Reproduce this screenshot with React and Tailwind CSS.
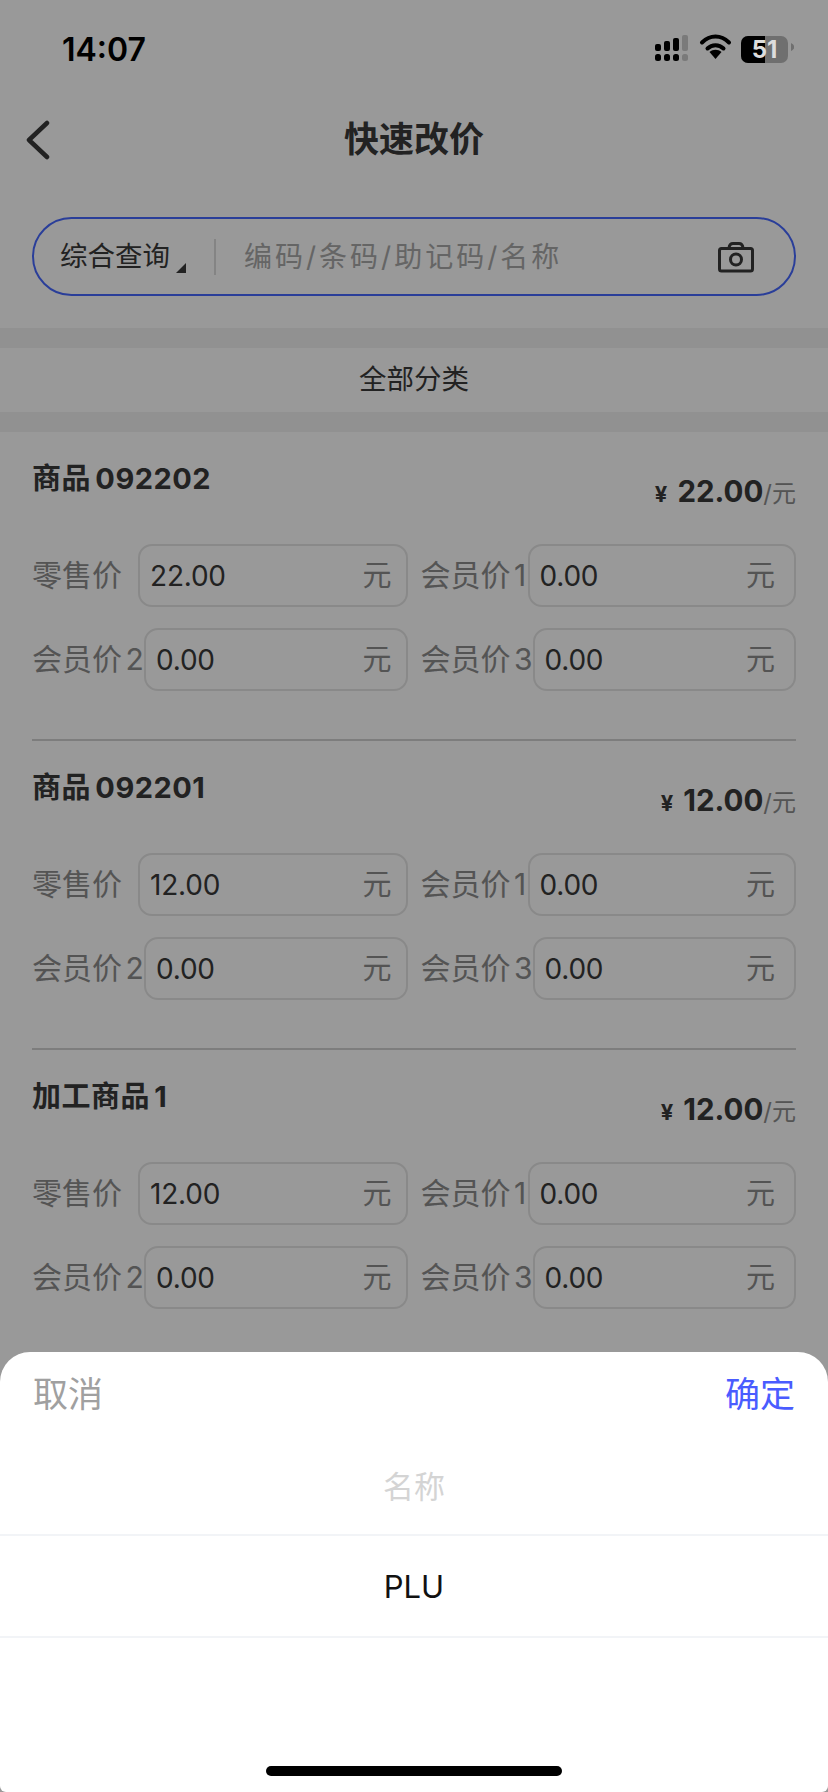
const FONT = "font-['Inter','Noto_Sans_CJK_SC',sans-serif]"

const items = [
  { name: '商品 092202', price: '22.00', retail: '22.00' },
  { name: '商品 092201', price: '12.00', retail: '12.00' },
  { name: '加工商品 1', price: '12.00', retail: '12.00' },
]

function StatusBar() {
  return (
    <div className="relative z-20 h-[96px] flex justify-between pl-[62px] pr-[34px] pt-[33px]">
      <span className="text-[32px] leading-[34px] font-semibold text-black">14:07</span>
      <div className="flex">
        <svg width="139" height="30" viewBox="655 35 139 30">
          {/* signal */}
          <rect x="655" y="46" width="6" height="7" rx="2" fill="#000" />
          <rect x="664" y="43" width="6" height="10" rx="2" fill="#000" />
          <rect x="673" y="40" width="6" height="13" rx="2" fill="#000" />
          <rect x="682" y="37" width="6" height="16" rx="2" fill="#7a7a7a" />
          <rect x="655" y="56" width="6" height="7" rx="2.5" fill="#000" />
          <rect x="664" y="56" width="6" height="7" rx="2.5" fill="#000" />
          <rect x="673" y="56" width="6" height="7" rx="2.5" fill="#000" />
          <rect x="682" y="56" width="6" height="7" rx="2.5" fill="#7a7a7a" />
          {/* wifi */}
          <path d="M702 44.5 C710 36.5 721 36.5 729 44.5" fill="none" stroke="#000" strokeWidth="4" strokeLinecap="round" />
          <path d="M707.500 50.500 C712 46 719 46 723.500 50.500" fill="none" stroke="#000" strokeWidth="4" strokeLinecap="round" />
          <path d="M709.500 54 L715.500 61 L721.500 54 C718 51 713 51 709.500 54 Z" fill="#000" />
          {/* battery nub */}
          <path d="M791 45 C793.500 46.500 794.500 48 794.500 49 C794.500 50 793.500 51.500 791 53 Z" fill="#6f6f6f" />
        </svg>
        <div className="absolute right-[40px] top-[36px] w-[47px] h-[27px] rounded-[7px] overflow-hidden flex bg-[#6f6f6f]">
          <div className="w-[24px] h-full bg-black" />
          <span className="absolute inset-0 text-center text-[24px] leading-[27px] font-bold text-[#dddddd]">51</span>
        </div>
      </div>
    </div>
  )
}

function NavBar() {
  return (
    <div className="relative h-[86px] flex items-center justify-center">
      <svg className="absolute left-[24px] top-[24px]" width="28" height="40" viewBox="0 0 28 40">
        <path d="M23 3 L5 20 L23 37" fill="none" stroke="#393939" strokeWidth="4.500" strokeLinecap="round" strokeLinejoin="round" />
      </svg>
      <h1 className="text-[35px] font-semibold text-[#393939]">快速改价</h1>
    </div>
  )
}

function SearchBox() {
  return (
    <div className="mx-[32px] mt-[35px] h-[79px] rounded-[40px] border-2 border-[#4668ff] flex items-center pl-[26px] pr-[40px]">
      <span className="text-[27.500px] text-[#393939] whitespace-nowrap">综合查询</span>
      <svg className="mt-[22px] ml-[6px] shrink-0" width="10" height="10" viewBox="0 0 10 10">
        <path d="M10 0 V10 H0 Z" fill="#393939" />
      </svg>
      <div className="w-[2px] h-[36px] bg-[#dddddd] ml-[28px] mr-[28px] shrink-0" />
      <span className="flex-1 text-[28px] text-[#a8a8a8] whitespace-nowrap tracking-[3px]">编码/条码/助记码/名称</span>
      <svg width="36" height="32" viewBox="0 0 36 32">
        <rect x="1.500" y="7.500" width="33" height="22.500" rx="2" fill="none" stroke="#393939" strokeWidth="3" />
        <path d="M11 7 Q11.500 2.500 15 2.500 H21 Q24.500 2.500 25 7" fill="none" stroke="#393939" strokeWidth="3" />
        <circle cx="18" cy="18.500" r="5.500" fill="none" stroke="#393939" strokeWidth="3" />
      </svg>
    </div>
  )
}

function Field({ label, labelWidth, value, unitPad }) {
  return (
    <div className="flex items-center">
      <span className={`${labelWidth} shrink-0 text-[30px] text-[#8c8c8c] whitespace-nowrap [word-spacing:-5px]`}>{label}</span>
      <div className={`flex-1 h-[63px] rounded-[14px] border-2 border-[#e5e5e5] flex items-center justify-between pl-[10px] ${unitPad}`}>
        <span className="text-[28px] text-[#393939] tracking-[-0.2px]">{value}</span>
        <span className="text-[29px] text-[#8c8c8c]">元</span>
      </div>
    </div>
  )
}

function Item({ name, price, retail }) {
  return (
    <div className="mx-[32px] h-[309px] border-b-2 border-[#d0d0d0]">
      <div className="flex justify-between h-[112px] pt-[28px]">
        <span className="text-[29px] leading-[38px] font-bold text-[#393939] tracking-[0.5px] [word-spacing:-3px]">{name}</span>
        <div className="flex items-baseline h-[38px] mt-[9px] text-[#393939]">
          <span className="text-[22px] font-bold mr-[10px]">¥</span>
          <span className="text-[29.500px] font-bold">{price}</span>
          <span className="text-[24px] text-[#8c8c8c]">/元</span>
        </div>
      </div>
      <div className="grid grid-cols-2 gap-x-[13px] gap-y-[21px]">
        <Field label="零售价" labelWidth="w-[106px]" value={retail} unitPad="pr-[14px]" />
        <Field label="会员价 1" labelWidth="w-[107px]" value="0.00" unitPad="pr-[19px]" />
        <Field label="会员价 2" labelWidth="w-[112px]" value="0.00" unitPad="pr-[14px]" />
        <Field label="会员价 3" labelWidth="w-[112px]" value="0.00" unitPad="pr-[19px]" />
      </div>
    </div>
  )
}

function PickerSheet() {
  return (
    <div className="absolute bottom-0 inset-x-0 z-20 h-[440px] bg-white rounded-t-[30px] rounded-b-[6px] flex flex-col">
      <div className="h-[84px] flex items-center justify-between px-[33px]">
        <span className="text-[35px] text-[#a0a0a0]">取消</span>
        <span className="text-[35px] text-[#4a5cff]">确定</span>
      </div>
      <div className="h-[100px] pt-[4px] flex items-center justify-center border-b-2 border-[#f2f4f7] text-[31px] text-[#d4d4d4]">名称</div>
      <div className="h-[102px] pt-[2px] flex items-center justify-center border-b-2 border-[#f2f4f7] text-[31px] text-[#111111]">PLU</div>
      <div className="mt-auto mb-[16px] mx-auto w-[296px] h-[10px] rounded-full bg-black" />
    </div>
  )
}

export default function App() {
  return (
    <div className={`relative w-[828px] h-[1792px] overflow-hidden bg-white ${FONT}`}>
      <StatusBar />
      <NavBar />
      <SearchBox />

      {/* Category row */}
      <div className="mt-[32px] h-[104px] bg-[#f2f2f2] py-[20px]">
        <div className="h-[64px] bg-white flex items-center justify-center text-[27.500px] text-[#393939]">全部分类</div>
      </div>

      {items.map((item) => (
        <Item key={item.name} {...item} />
      ))}

      {/* Dim layer under the picker */}
      <div className="absolute inset-0 z-10 bg-black/40" />
      <PickerSheet />
    </div>
  )
}
